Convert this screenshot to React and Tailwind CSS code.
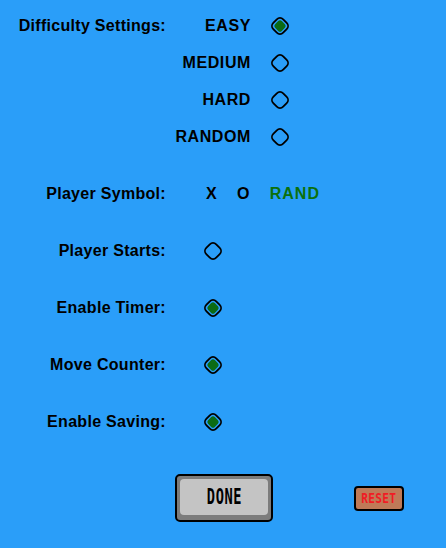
const difficulties = ['EASY', 'MEDIUM', 'HARD', 'RANDOM']

const toggles = [
  { label: 'Player Starts:', on: false },
  { label: 'Enable Timer:', on: true },
  { label: 'Move Counter:', on: true },
  { label: 'Enable Saving:', on: true },
]

function Radio({ on }) {
  return (
    <svg width="18" height="18" viewBox="0 0 18 18" className="block">
      <rect x="2" y="2" width="14" height="14" rx="4.5" transform="rotate(45 9 9)" fill="none" stroke="#000" strokeWidth="1.8" />
      {on && <rect x="4.3" y="4.3" width="9.4" height="9.4" rx="2.5" transform="rotate(45 9 9)" fill="#0b6b14" />}
    </svg>
  )
}

function Label({ children }) {
  return <div className="w-[166px] shrink-0 text-right">{children}</div>
}

export default function App() {
  return (
    <div
      className="w-[446px] h-[548px] bg-[#2a9ef9] text-black font-bold text-[16px] tracking-[0.3px] overflow-hidden"
      style={{ fontFamily: '"Liberation Sans", Arial, sans-serif' }}
    >
      <div className="pt-[7px]">
        {difficulties.map((d, i) => (
          <div key={d} className="flex items-center h-[37px]">
            <Label>{i === 0 ? 'Difficulty Settings:' : ''}</Label>
            <div className="w-[85px] text-right tracking-[0.6px]">{d}</div>
            <div className="ml-[20px]">
              <Radio on={i === 0} />
            </div>
          </div>
        ))}
      </div>

      <div className="mt-[10px]">
        <div className="flex items-center h-[57px]">
          <Label>Player Symbol:</Label>
          <div className="flex items-center ml-[40px] gap-[20px]">
            <span>X</span>
            <span>O</span>
            <span className="text-[#0b700b] tracking-[1px]">RAND</span>
          </div>
        </div>
        {toggles.map((t) => (
          <div key={t.label} className="flex items-center h-[57px]">
            <Label>{t.label}</Label>
            <div className="ml-[38px]">
              <Radio on={t.on} />
            </div>
          </div>
        ))}
      </div>

      <div className="flex items-center mt-[24px]">
        <button className="ml-[175px] w-[98px] h-[48px] rounded-[5px] border-2 border-black bg-[#7c7c7c] pt-[3px] px-[3px] pb-[5px]">
          <div className="w-full h-full rounded-[4px] bg-[#c4c4c4] flex items-center justify-center">
            <span
              className="inline-block text-[22px] leading-none tracking-[1px] scale-x-[0.62]"
              style={{ fontFamily: '"DejaVu Sans Mono", monospace' }}
            >
              DONE
            </span>
          </div>
        </button>
        <button className="ml-[81px] w-[50px] h-[25px] rounded-[4px] border-2 border-black bg-[#bf7a58] flex items-center justify-center">
          <span
            className="inline-block text-[14px] leading-none text-[#f01c24] scale-x-[0.8]"
            style={{ fontFamily: '"DejaVu Sans Mono", monospace' }}
          >
            RESET
          </span>
        </button>
      </div>
    </div>
  )
}
